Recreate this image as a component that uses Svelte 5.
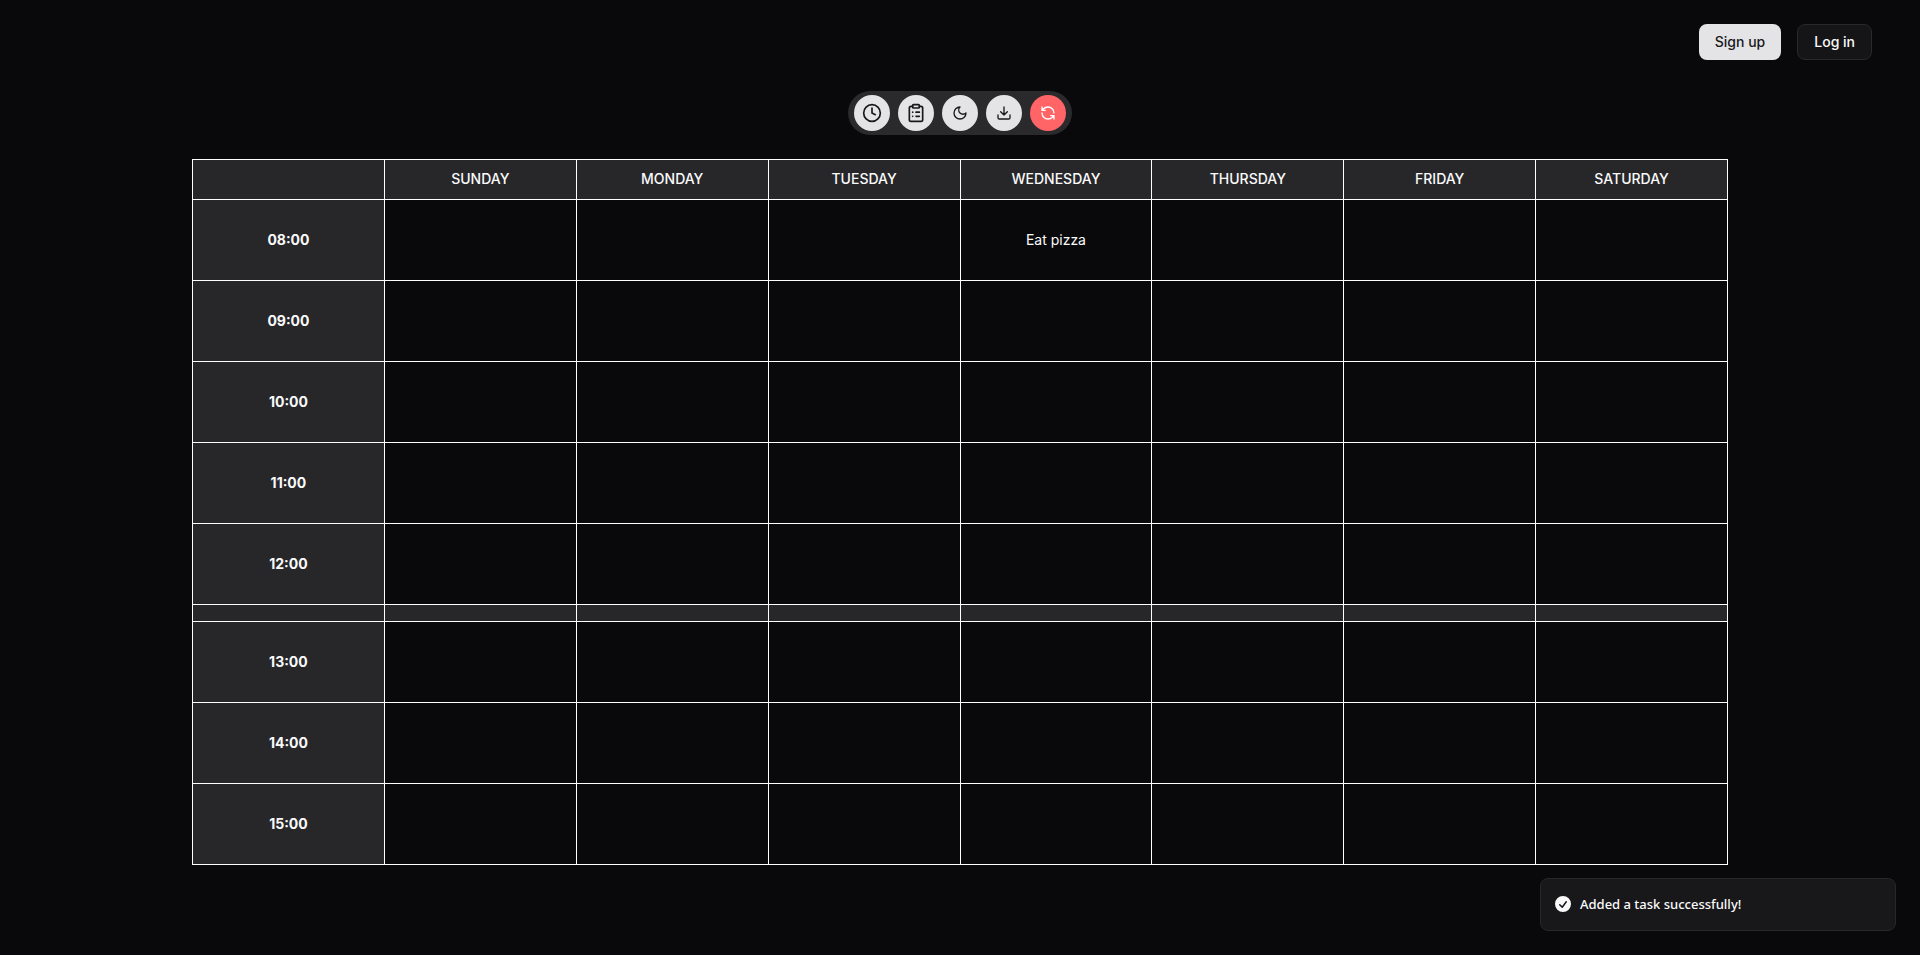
<script>
  const days = ['Sunday', 'Monday', 'Tuesday', 'Wednesday', 'Thursday', 'Friday', 'Saturday'];
  const morning = ['08:00', '09:00', '10:00', '11:00', '12:00'];
  const afternoon = ['13:00', '14:00', '15:00'];
  const tasks = { 'Wednesday 08:00': 'Eat pizza' };
</script>

{#snippet slot(hour)}
  <tr class="slot">
    <th scope="row">{hour}</th>
    {#each days as day}
      <td>{tasks[`${day} ${hour}`] ?? ''}</td>
    {/each}
  </tr>
{/snippet}

<div class="page">
  <header>
    <button class="btn primary">Sign up</button>
    <button class="btn outline">Log in</button>
  </header>

  <main>
    <div class="toolbar" role="toolbar" aria-label="Schedule tools">
      <button aria-label="Set hours">
        <svg width="20" height="20" viewBox="0 0 24 24" stroke-width="2">
          <circle cx="12" cy="12" r="10" />
          <path d="M12 6v6l4 2" />
        </svg>
      </button>
      <button aria-label="Add task">
        <svg width="20" height="20" viewBox="0 0 24 24" stroke-width="2">
          <rect x="8" y="2" width="8" height="4" rx="1" />
          <path d="M16 4h2a2 2 0 0 1 2 2v14a2 2 0 0 1-2 2H6a2 2 0 0 1-2-2V6a2 2 0 0 1 2-2h2M12 11h4M12 16h4M8 11h.01M8 16h.01" />
        </svg>
      </button>
      <button aria-label="Toggle theme">
        <svg width="16" height="16" viewBox="0 0 24 24" stroke-width="2">
          <path d="M12 3a6 6 0 0 0 9 9 9 9 0 1 1-9-9Z" />
        </svg>
      </button>
      <button aria-label="Download">
        <svg width="16" height="16" viewBox="0 0 24 24" stroke-width="2">
          <path d="M21 15v4a2 2 0 0 1-2 2H5a2 2 0 0 1-2-2v-4M7 10l5 5 5-5M12 15V3" />
        </svg>
      </button>
      <button class="danger" aria-label="Reset">
        <svg width="16" height="16" viewBox="0 0 24 24" stroke-width="2">
          <path d="M21 12a9 9 0 0 0-9-9 9.75 9.75 0 0 0-6.74 2.74L3 8M3 3v5h5M3 12a9 9 0 0 0 9 9 9.75 9.75 0 0 0 6.74-2.74L21 16M16 16h5v5" />
        </svg>
      </button>
    </div>

    <table>
      <thead>
        <tr>
          <td class="corner"></td>
          {#each days as day}
            <th scope="col">{day}</th>
          {/each}
        </tr>
      </thead>
      <tbody>
        {#each morning as hour}
          {@render slot(hour)}
        {/each}
        <tr class="break">
          <td></td>
          {#each days as _}
            <td></td>
          {/each}
        </tr>
        {#each afternoon as hour}
          {@render slot(hour)}
        {/each}
      </tbody>
    </table>
  </main>

  <div class="toast" role="status">
    <svg width="20" height="20" viewBox="0 0 20 20" aria-hidden="true">
      <path
        fill="currentColor"
        fill-rule="evenodd"
        d="M10 18a8 8 0 100-16 8 8 0 000 16zm3.857-9.809a.75.75 0 00-1.214-.882l-3.483 4.79-1.88-1.88a.75.75 0 10-1.06 1.061l2.5 2.5a.75.75 0 001.137-.089l4-5.5z"
      />
    </svg>
    <span>Added a task successfully!</span>
  </div>
</div>

<style>
  :global(body) {
    margin: 0;
    background: #09090b;
  }

  .page {
    box-sizing: border-box;
    min-height: 100vh;
    color: #fafafa;
    font: 14px/20px Inter, sans-serif;
  }

  header {
    display: flex;
    justify-content: flex-end;
    gap: 16px;
    padding: 24px 48px;
  }

  button {
    font: inherit;
    color: inherit;
    cursor: pointer;
  }

  .btn {
    height: 36px;
    padding: 0 16px;
    border: 1px solid transparent;
    border-radius: 8px;
    font-weight: 500;
  }

  .primary {
    padding: 0 15px;
    background: #e4e4e7;
    color: #18181b;
  }

  .outline {
    background: #151518;
    border-color: #29292c;
  }

  main {
    display: flex;
    flex-direction: column;
    align-items: center;
    gap: 24px;
    padding: 7px 0 24px;
  }

  .toolbar {
    display: flex;
    gap: 8px;
    padding: 4px 6px;
    border-radius: 22px;
    background: #2a2a2c;
  }

  .toolbar button {
    display: flex;
    align-items: center;
    justify-content: center;
    width: 36px;
    height: 36px;
    padding: 0;
    border: 0;
    border-radius: 50%;
    background: #e4e4e7;
    color: #18181b;
  }

  .toolbar .danger {
    background: #ff6467;
    color: #fff;
  }

  .toolbar svg {
    fill: none;
    stroke: currentColor;
    stroke-linecap: round;
    stroke-linejoin: round;
  }

  table {
    width: 80%;
    table-layout: fixed;
    border-collapse: collapse;
    text-align: center;
  }

  th,
  td {
    box-sizing: border-box;
    padding: 0;
    border: 1px solid #fff;
  }

  th,
  .corner,
  .break td {
    background: #27272a;
  }

  thead tr {
    height: 40px;
  }

  thead th {
    padding-bottom: 2px;
    font-weight: 500;
    text-transform: uppercase;
  }

  .slot {
    height: 81px;
  }

  .slot th {
    font-weight: 700;
  }

  .break {
    height: 17px;
  }

  .toast {
    position: fixed;
    right: 24px;
    bottom: 24px;
    box-sizing: border-box;
    display: flex;
    align-items: center;
    gap: 7px;
    width: 356px;
    padding: 15px 12px 16px;
    border: 1px solid #27272a;
    border-radius: 8px;
    background: #18181b;
    font: 500 13px/20px "Noto Sans", sans-serif;
  }
</style>
